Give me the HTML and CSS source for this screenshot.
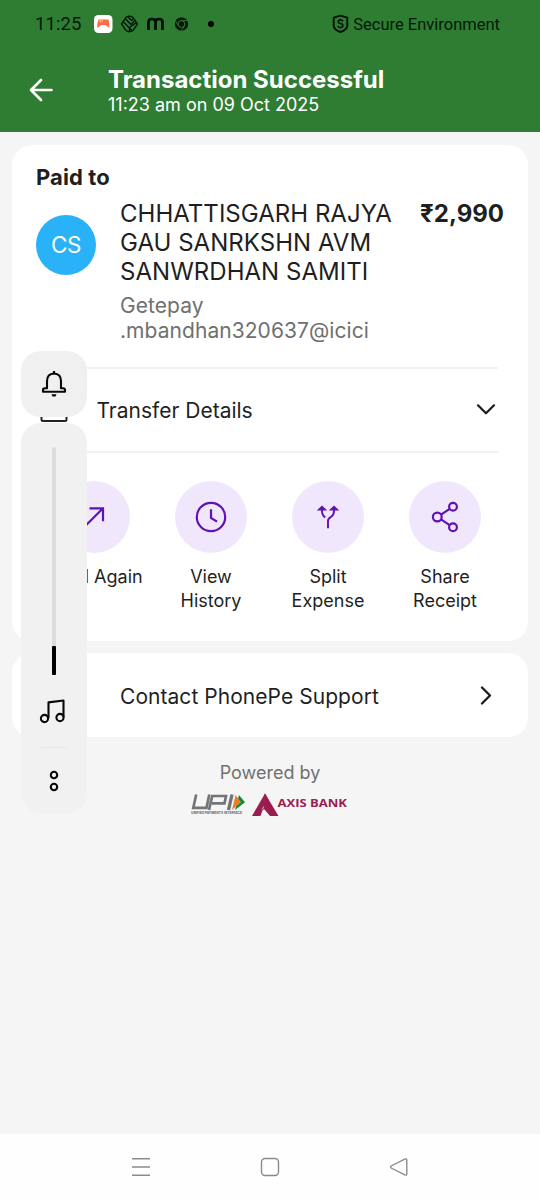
FILE: index.html
```html
<!DOCTYPE html>
<html lang="en">
<head>
<meta charset="utf-8">
<title>Transaction Successful</title>
<link rel="stylesheet" href="styles.css">
</head>
<body>
<div class="screen">
  <header class="header">
    <div class="status">
      <span class="clock">11:25</span>
      <svg class="status-icons" width="124" height="22" viewBox="0 0 124 22">
        <rect x="0" y="2" width="18.5" height="18" rx="4.5" fill="#fff"/>
        <path d="M4.500 6.500H14.500Q15.800 11 15.300 15L11.500 12H7.500L3.300 15Q2.700 11 4.500 6.500Z" fill="#fb6a4a"/>
        <path d="M5 8h4M7 6.500v3" stroke="#ffb04f" stroke-width="1.300"/>
        <g fill="none" stroke="#06180a" stroke-width="1.400">
          <path d="M27.500 11L32 4.500Q35.500 2 39 4.500L43.500 11L39 17.500Q35.500 20 32 17.500Z"/>
          <path d="M29 8.500L38 17.500M31.500 6L37 11.500L41 7.500M35.500 19V14.500L42.500 9.500M34 4L37.500 7.500L40 5"/>
        </g>
        <path d="M54.500 17V9Q54.500 6 58 6Q61.500 6 61.500 9V17M61.500 9Q61.500 6 65 6Q68.500 6 68.500 9V17" fill="none" stroke="#030d05" stroke-width="2.700"/>
        <circle cx="87.500" cy="11" r="6.700" fill="#06180a"/>
        <circle cx="87.500" cy="11" r="3.400" fill="none" stroke="#2e7d32" stroke-width="1"/>
        <path d="M87.500 7.600H93M84.500 12.800L81.800 8.200M90.400 12.800L87.500 17.600" stroke="#2e7d32" stroke-width=".9"/>
        <circle cx="117" cy="11" r="3" fill="#000"/>
      </svg>
      <span class="secure">
        <svg width="17" height="20" viewBox="0 0 17 20">
          <path d="M8.500 1.700L15.300 3.700V11.500Q15.300 15.500 8.500 18Q1.700 15.500 1.700 11.500V3.700Z" fill="none" stroke="#041207" stroke-width="1.900" stroke-linejoin="round"/>
          <path d="M11 7.300Q10.500 6 8.500 6Q6.200 6 6.200 7.700Q6.200 9.200 8.500 9.600Q10.900 10 10.900 11.700Q10.900 13.400 8.500 13.400Q6.300 13.400 5.900 11.900M8.500 4.800V6M8.500 13.400V14.600" fill="none" stroke="#041207" stroke-width="1.500"/>
        </svg>
        <span class="secure-text">Secure Environment</span>
      </span>
    </div>
    <div class="appbar">
      <svg class="back" width="26" height="26" viewBox="0 0 26 26"><path d="M23.500 13H3M13 3L3 13L13 23" fill="none" stroke="#fff" stroke-width="2.700" stroke-linecap="round" stroke-linejoin="round"/></svg>
      <div>
        <h1 class="title">Transaction Successful</h1>
        <p class="subtitle">11:23 am on 09 Oct 2025</p>
      </div>
    </div>
  </header>

  <main class="content">
    <section class="card payment">
      <h2 class="paid">Paid to</h2>
      <div class="payee">
        <div class="avatar">CS</div>
        <div class="payee-info">
          <div class="name">CHHATTISGARH RAJYA<br>GAU SANRKSHN AVM<br>SANWRDHAN SAMITI</div>
          <div class="vpa">Getepay<br>.mbandhan320637@icici</div>
        </div>
        <div class="amount">₹2,990</div>
      </div>
      <div class="details">
        <svg width="28" height="26" viewBox="0 0 28 26"><path d="M1.500 1V22.500Q1.500 24 3 24H25Q26.500 24 26.500 22.500V1" fill="none" stroke="#222" stroke-width="2"/></svg>
        <span class="details-text">Transfer Details</span>
        <svg width="20" height="12" viewBox="0 0 20 12"><path d="M2 1.300L10 9.300L18 1.300" fill="none" stroke="#1b1b1b" stroke-width="2.200" stroke-linecap="round" stroke-linejoin="round"/></svg>
      </div>
      <div class="actions">
        <div class="action">
          <div class="bubble"><svg width="36" height="36" viewBox="0 0 36 36"><path d="M13.500 9.300H27V22.300M27 9.300L8 28.300"/></svg></div>
          <span>Send Again</span>
        </div>
        <div class="action">
          <div class="bubble"><svg width="36" height="36" viewBox="0 0 36 36"><circle cx="18" cy="18" r="14.200"/><path d="M18 10.300V18.800L24 22.700"/></svg></div>
          <span>View<br>History</span>
        </div>
        <div class="action">
          <div class="bubble"><svg width="36" height="36" viewBox="0 0 36 36"><path d="M12 8V12Q12 16.500 15.300 18.300M24 8V12Q24 16 21 17.800Q18 19.500 18 22V29.300M9.200 10.500L12 7.900L14.800 10.500ZM21.200 10.500L24 7.900L26.800 10.500Z" stroke-width="1.900"/></svg></div>
          <span>Split<br>Expense</span>
        </div>
        <div class="action">
          <div class="bubble"><svg width="36" height="36" viewBox="0 0 36 36"><circle cx="10.300" cy="18" r="4.400"/><circle cx="26" cy="7.700" r="3.900"/><circle cx="26" cy="28.300" r="3.900"/><path d="M14 15.600L22.700 9.900M14 20.400L22.700 26.100"/></svg></div>
          <span>Share<br>Receipt</span>
        </div>
      </div>
    </section>

    <section class="card support">
      <span class="support-text">Contact PhonePe Support</span>
      <svg width="14" height="20" viewBox="0 0 14 20"><path d="M3 2.500L11 10.500L3 18.500" fill="none" stroke="#1b1b1b" stroke-width="2.300" stroke-linecap="round" stroke-linejoin="round"/></svg>
    </section>

    <section class="powered">
      <span class="powered-text">Powered by</span>
      <svg width="158" height="26" viewBox="0 0 158 26">
        <g fill="none" stroke="#737477" stroke-width="2.700">
          <path d="M5.200 2.500L2.300 15.800H15.500L18.300 2.500"/>
          <path d="M18 18L21.200 4H35L33.500 11.300H21"/>
          <path d="M41 2.500L37.500 18" stroke-width="3.400"/>
        </g>
        <path d="M48 3L54 10.300L44 18Z" fill="#118a43"/>
        <path d="M44.500 3L50 10.300L41 18Z" fill="#ef7d28"/>
        <text x="0" y="22.300" class="upi-caption" textLength="51" lengthAdjust="spacingAndGlyphs">UNIFIED PAYMENTS INTERFACE</text>
        <path d="M74 1.500L78 8.500L69.500 24H61Z" fill="#9a1c51"/>
        <path d="M74 1.500L87.500 24H79L70.500 14L72 7Z" fill="#9a1c51"/>
        <path d="M73.300 13.500L69.800 18.500L71.500 16.500L78.500 24H69.500Z" fill="#f5f5f5"/>
        <text x="86.500" y="15.300" class="axis" textLength="69.5" lengthAdjust="spacingAndGlyphs">AXIS BANK</text>
      </svg>
    </section>
  </main>

  <nav class="navbar">
    <svg width="20" height="20" viewBox="0 0 20 20"><path d="M1 1.700H19M1 10H19M1 18.200H19"/></svg>
    <svg width="20" height="20" viewBox="0 0 20 20"><rect x="1.500" y="1.500" width="17" height="17" rx="3.500"/></svg>
    <svg width="20" height="20" viewBox="0 0 20 20"><path d="M2.200 9Q1 10 2.200 11L15.800 17.900Q17.800 18.700 17.800 17V3Q17.800 1.300 15.800 2.100Z"/></svg>
  </nav>

  <aside class="volume">
    <div class="ringer">
      <svg width="26" height="28" viewBox="0 0 26 28"><path d="M13 2.500Q19.900 2.800 20 10V17.300H22Q24 17.300 24 19V20.800H2V19Q2 17.300 4 17.300H6V10Q6.100 2.800 13 2.500Z" fill="none" stroke="#080808" stroke-width="2.100" stroke-linejoin="round"/><path d="M13 0V3" stroke="#080808" stroke-width="2.200"/><path d="M10.500 23.200H15.500L14.500 25.500H11.500Z" fill="#080808"/></svg>
    </div>
    <div class="slider">
      <div class="track"><div class="level"></div></div>
      <svg class="music" width="28" height="26" viewBox="0 0 28 26"><g fill="none" stroke="#080808" stroke-width="2.100"><path d="M9.500 20V4.400L24.500 2.500V19" stroke-linejoin="round"/><circle cx="5.500" cy="20.500" r="3.600"/><circle cx="21" cy="19.500" r="3.600"/></g></svg>
      <div class="rule"></div>
      <svg class="more" width="10" height="22" viewBox="0 0 10 22"><g fill="none" stroke="#080808" stroke-width="2.100"><circle cx="5" cy="5" r="3.200"/><circle cx="5" cy="17" r="3.200"/></g></svg>
    </div>
  </aside>
</div>
</body>
</html>
```
FILE: styles.css
```css
* { box-sizing: border-box; }
body { margin: 0; font-family: Inter, "Noto Sans", sans-serif; color: #1f1f1f; }
h1, h2, p { margin: 0; }
svg { display: block; flex: none; }

.screen { position: relative; display: flex; flex-direction: column; width: 540px; height: 1200px; background: #f5f5f5; overflow: hidden; }

.header { height: 132px; background: #2e7d32; }
.status { display: flex; align-items: center; height: 48px; padding: 0 40px 0 35px; font-family: Roboto, sans-serif; color: #06180a; }
.clock { width: 59px; font-size: 18.5px; letter-spacing: 0.1px; white-space: nowrap; }
.secure { display: flex; align-items: center; gap: 4px; margin-left: auto; }
.secure-text { font-size: 16.5px; white-space: nowrap; }
.appbar { display: flex; align-items: center; height: 84px; padding: 0 0 0 28px; }
.back { margin-right: 54px; }
.title { font-size: 24px; line-height: 29px; font-weight: 700; color: #fff; white-space: nowrap; }
.subtitle { font-size: 18px; line-height: 22px; color: #fff; white-space: nowrap; }

.content { flex: 1; padding: 13px 12px 0; }
.card { background: #fff; border-radius: 20px; }
.payment { height: 496px; padding: 18px 24px 0; }
.paid { font-size: 22px; line-height: 28px; font-weight: 700; letter-spacing: 0.1px; }
.payee { display: flex; height: 176px; padding-top: 8px; }
.avatar { width: 60px; height: 60px; margin: 16px 24px 0 0; border-radius: 50%; background: #29b2f8; color: #fff; font-size: 22.5px; line-height: 60px; text-align: center; letter-spacing: -0.4px; }
.payee-info { flex: 1; }
.name { font-size: 24px; line-height: 29px; letter-spacing: 0.03px; white-space: nowrap; }
.vpa { margin-top: 7px; font-size: 21px; line-height: 25px; letter-spacing: 0.06px; color: #707070; white-space: nowrap; }
.amount { font-size: 24px; line-height: 29px; font-weight: 700; }
.details { display: flex; align-items: center; height: 86px; margin: 0 6px 0 0; padding: 0 2px 0 4px; border: solid #f2f2f2; border-width: 2px 0; }
.details-text { flex: 1; margin-left: 28.5px; font-size: 21px; }
.actions { display: grid; grid-template-columns: repeat(4, 117px); margin: 28px 0 0 -0.5px; }
.action { display: flex; flex-direction: column; align-items: center; gap: 12px; font-size: 18px; line-height: 24px; text-align: center; white-space: nowrap; }
.bubble { display: flex; align-items: center; justify-content: center; width: 72px; height: 72px; border-radius: 50%; background: #f1e7fc; }
.bubble svg { fill: none; stroke: #5f12b5; stroke-width: 2.2; }

.support { display: flex; align-items: center; height: 84px; margin-top: 12px; padding: 0 35px 0 108px; }
.support-text { flex: 1; padding-top: 2px; font-size: 21px; letter-spacing: 0.05px; }

.powered { display: flex; flex-direction: column; align-items: center; gap: 8px; padding-top: 25px; }
.powered-text { font-size: 18px; line-height: 22px; color: #707070; }
.upi-caption { font: 700 3.6px Inter, sans-serif; fill: #666; }
.axis { font: 700 11.2px "Open Sans", sans-serif; fill: #9a1c51; }

.navbar { display: flex; align-items: center; justify-content: center; gap: 109px; height: 66px; background: #fefefe; }
.navbar svg { fill: none; stroke: #8b8b8b; stroke-width: 1.4; }

.volume { position: absolute; left: 21px; top: 351px; width: 66px; }
.ringer { display: flex; justify-content: center; height: 66px; padding-top: 20px; border-radius: 20px; background: #f0f0f0; }
.slider { display: flex; flex-direction: column; align-items: center; height: 390px; margin-top: 6px; padding-top: 24px; border-radius: 20px; background: #f1f1f1; }
.track { display: flex; align-items: flex-end; width: 4px; height: 228px; border-radius: 2px; background: #dcdcdc; }
.level { width: 4px; height: 29px; border-radius: 1px; background: #000; }
.music { margin: 23px 3px 0 0; }
.rule { width: 26px; height: 1px; margin-top: 23px; background: #e6e6e6; }
.more { margin-top: 22px; }
```
